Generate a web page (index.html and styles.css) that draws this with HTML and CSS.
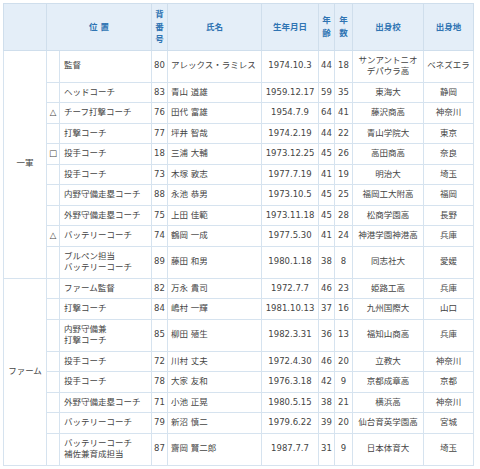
FILE: index.html
```html
<!DOCTYPE html>
<html lang="ja">
<head>
<meta charset="utf-8">
<link rel="stylesheet" href="styles.css">
</head>
<body>
<table class="staff">
<colgroup>
<col class="c-grp"><col class="c-mark"><col class="c-pos"><col class="c-num"><col class="c-name"><col class="c-birth"><col class="c-age"><col class="c-yrs"><col class="c-school"><col class="c-place">
</colgroup>
<thead>
<tr>
<th></th>
<th colspan="2">位 置</th>
<th>背<br>番<br>号</th>
<th>氏名</th>
<th>生年月日</th>
<th>年<br>齢</th>
<th>年<br>数</th>
<th>出身校</th>
<th>出身地</th>
</tr>
</thead>
<tbody>
<tr><td class="grp" rowspan="10">一軍</td><td class="mark"></td><td class="pos">監督</td><td class="num">80</td><td class="name">アレックス・ラミレス</td><td class="c">1974.10.3</td><td class="c">44</td><td class="c">18</td><td class="c">サンアントニオ<br>デパウラ高</td><td class="c">ベネズエラ</td></tr>
<tr><td class="mark"></td><td class="pos">ヘッドコーチ</td><td class="num">83</td><td class="name">青山 道雄</td><td class="c">1959.12.17</td><td class="c">59</td><td class="c">35</td><td class="c">東海大</td><td class="c">静岡</td></tr>
<tr><td class="mark">△</td><td class="pos">チーフ打撃コーチ</td><td class="num">76</td><td class="name">田代 富雄</td><td class="c">1954.7.9</td><td class="c">64</td><td class="c">41</td><td class="c">藤沢商高</td><td class="c">神奈川</td></tr>
<tr><td class="mark"></td><td class="pos">打撃コーチ</td><td class="num">77</td><td class="name">坪井 智哉</td><td class="c">1974.2.19</td><td class="c">44</td><td class="c">22</td><td class="c">青山学院大</td><td class="c">東京</td></tr>
<tr><td class="mark">□</td><td class="pos">投手コーチ</td><td class="num">18</td><td class="name">三浦 大輔</td><td class="c">1973.12.25</td><td class="c">45</td><td class="c">26</td><td class="c">高田商高</td><td class="c">奈良</td></tr>
<tr><td class="mark"></td><td class="pos">投手コーチ</td><td class="num">73</td><td class="name">木塚 敦志</td><td class="c">1977.7.19</td><td class="c">41</td><td class="c">19</td><td class="c">明治大</td><td class="c">埼玉</td></tr>
<tr><td class="mark"></td><td class="pos">内野守備走塁コーチ</td><td class="num">88</td><td class="name">永池 恭男</td><td class="c">1973.10.5</td><td class="c">45</td><td class="c">25</td><td class="c">福岡工大附高</td><td class="c">福岡</td></tr>
<tr><td class="mark"></td><td class="pos">外野守備走塁コーチ</td><td class="num">75</td><td class="name">上田 佳範</td><td class="c">1973.11.18</td><td class="c">45</td><td class="c">28</td><td class="c">松商学園高</td><td class="c">長野</td></tr>
<tr><td class="mark">△</td><td class="pos">バッテリーコーチ</td><td class="num">74</td><td class="name">鶴岡 一成</td><td class="c">1977.5.30</td><td class="c">41</td><td class="c">24</td><td class="c">神港学園神港高</td><td class="c">兵庫</td></tr>
<tr><td class="mark"></td><td class="pos">ブルペン担当<br>バッテリーコーチ</td><td class="num">89</td><td class="name">藤田 和男</td><td class="c">1980.1.18</td><td class="c">38</td><td class="c">8</td><td class="c">同志社大</td><td class="c">愛媛</td></tr>
<tr><td class="grp" rowspan="8">ファーム</td><td class="mark"></td><td class="pos">ファーム監督</td><td class="num">82</td><td class="name">万永 貴司</td><td class="c">1972.7.7</td><td class="c">46</td><td class="c">23</td><td class="c">姫路工高</td><td class="c">兵庫</td></tr>
<tr><td class="mark"></td><td class="pos">打撃コーチ</td><td class="num">84</td><td class="name">嶋村 一輝</td><td class="c">1981.10.13</td><td class="c">37</td><td class="c">16</td><td class="c">九州国際大</td><td class="c">山口</td></tr>
<tr><td class="mark"></td><td class="pos">内野守備兼<br>打撃コーチ</td><td class="num">85</td><td class="name">柳田 殖生</td><td class="c">1982.3.31</td><td class="c">36</td><td class="c">13</td><td class="c">福知山商高</td><td class="c">兵庫</td></tr>
<tr><td class="mark"></td><td class="pos">投手コーチ</td><td class="num">72</td><td class="name">川村 丈夫</td><td class="c">1972.4.30</td><td class="c">46</td><td class="c">20</td><td class="c">立教大</td><td class="c">神奈川</td></tr>
<tr><td class="mark"></td><td class="pos">投手コーチ</td><td class="num">78</td><td class="name">大家 友和</td><td class="c">1976.3.18</td><td class="c">42</td><td class="c">9</td><td class="c">京都成章高</td><td class="c">京都</td></tr>
<tr><td class="mark"></td><td class="pos">外野守備走塁コーチ</td><td class="num">71</td><td class="name">小池 正晃</td><td class="c">1980.5.15</td><td class="c">38</td><td class="c">21</td><td class="c">横浜高</td><td class="c">神奈川</td></tr>
<tr><td class="mark"></td><td class="pos">バッテリーコーチ</td><td class="num">79</td><td class="name">新沼 慎二</td><td class="c">1979.6.22</td><td class="c">39</td><td class="c">20</td><td class="c">仙台育英学園高</td><td class="c">宮城</td></tr>
<tr><td class="mark"></td><td class="pos">バッテリーコーチ<br>補佐兼育成担当</td><td class="num">87</td><td class="name">齋岡 賢二郎</td><td class="c">1987.7.7</td><td class="c">31</td><td class="c">9</td><td class="c">日本体育大</td><td class="c">埼玉</td></tr>
</tbody>
</table>
</body>
</html>
```

FILE: styles.css
```css
html, body {
  margin: 0;
  padding: 0;
  background: #ffffff;
}
body {
  padding: 3px;
  font-family: "DejaVu Sans", "Noto Sans CJK JP", sans-serif;
  font-size: 8.5px;
  color: #444444;
}
.staff {
  width: 470px;
  table-layout: fixed;
  border-collapse: collapse;
  border: 1px solid #cfdeec;
}
.c-grp { width: 43px; }
.c-mark { width: 13px; }
.c-pos { width: 92px; }
.c-num { width: 16px; }
.c-name { width: 94px; }
.c-birth { width: 57px; }
.c-age { width: 16px; }
.c-yrs { width: 18px; }
.c-school { width: 71px; }
.c-place { width: 50px; }

.staff th {
  background: #e4eef8;
  color: #2f74b3;
  font-weight: bold;
  border: 1px solid #cfdeec;
  padding: 4px 0;
  line-height: 12.5px;
  text-align: center;
  vertical-align: middle;
}
.staff td {
  border: 1px solid #d6e3ef;
  padding: 4px 3px;
  line-height: 11.5px;
  vertical-align: middle;
  white-space: nowrap;
}
.staff td.grp {
  text-align: center;
  padding: 0;
}
.staff td.mark {
  padding: 0;
  text-align: center;
}
.staff td.pos {
  padding-left: 4px;
}
.staff td.num {
  padding: 4px 0 4px 2px;
}
.staff td.name {
  padding-left: 3px;
}
.staff td.c {
  text-align: center;
  padding-left: 0;
  padding-right: 0;
}
```
